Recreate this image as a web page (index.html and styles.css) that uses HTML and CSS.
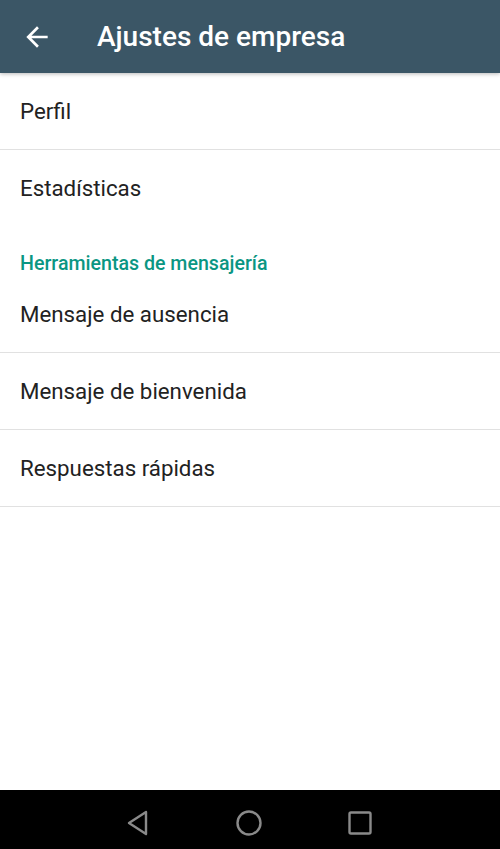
FILE: index.html
```html
<!DOCTYPE html>
<html lang="es">
<head>
<meta charset="utf-8">
<title>Ajustes de empresa</title>
<link rel="stylesheet" href="styles.css">
</head>
<body>
<div class="screen">
  <header class="appbar">
    <svg class="back" width="32" height="32" viewBox="0 0 24 24"><path d="M20 11H7.83l5.59-5.59L12 4l-8 8 8 8 1.41-1.41L7.83 13H20v-2z" fill="#fff"/></svg>
    <h1 class="title">Ajustes de empresa</h1>
  </header>
  <main class="content">
    <div class="item divider">Perfil</div>
    <div class="item">Estadísticas</div>
    <div class="section">Herramientas de mensajería</div>
    <div class="item divider">Mensaje de ausencia</div>
    <div class="item divider">Mensaje de bienvenida</div>
    <div class="item divider">Respuestas rápidas</div>
  </main>
  <nav class="navbar">
    <svg width="26" height="28" viewBox="0 0 26 28"><path d="M21 3 L4 14 L21 25 Z" fill="none" stroke="#8a8a8a" stroke-width="2.4" stroke-linejoin="round"/></svg>
    <svg width="28" height="28" viewBox="0 0 28 28"><circle cx="14" cy="14" r="11.5" fill="none" stroke="#8a8a8a" stroke-width="2.4"/></svg>
    <svg width="26" height="26" viewBox="0 0 26 26"><rect x="2.5" y="2.5" width="21" height="21" rx="1.5" fill="none" stroke="#8a8a8a" stroke-width="2.4"/></svg>
  </nav>
</div>
</body>
</html>
```

FILE: styles.css
```css
* { box-sizing: border-box; }
html, body { margin: 0; padding: 0; }
body {
  font-family: Roboto, "Noto Sans", "Liberation Sans", sans-serif;
  background: #fff;
}
.screen {
  width: 500px;
  height: 849px;
  display: flex;
  flex-direction: column;
  overflow: hidden;
}
.appbar {
  height: 73px;
  flex: 0 0 73px;
  background: #3b5666;
  display: flex;
  align-items: center;
  padding-left: 21px;
  position: relative;
  z-index: 1;
  box-shadow: 0 1px 4px rgba(0,0,0,0.28);
}
.back { width: 32px; height: 32px; flex: 0 0 32px; }
.title {
  margin: 0 0 0 44px;
  color: #fff;
  font-size: 28px;
  font-weight: 500;
  letter-spacing: 0;
}
.content {
  flex: 1;
  display: flex;
  flex-direction: column;
}
.item {
  height: 77px;
  display: flex;
  align-items: center;
  padding-left: 20px;
  padding-bottom: 1px;
  font-size: 22.3px;
  color: #222;
}
.divider { border-bottom: 1px solid #e1e1e1; }
.section {
  height: 49px;
  display: flex;
  align-items: flex-end;
  padding-left: 20px;
  padding-bottom: 1px;
  font-size: 19.6px;
  font-weight: 500;
  color: #0a9683;
}
.navbar {
  flex: 0 0 59px;
  background: #000;
  display: flex;
  align-items: center;
  justify-content: center;
  gap: 84px;
  padding-right: 3px;
  padding-top: 7px;
}
```
